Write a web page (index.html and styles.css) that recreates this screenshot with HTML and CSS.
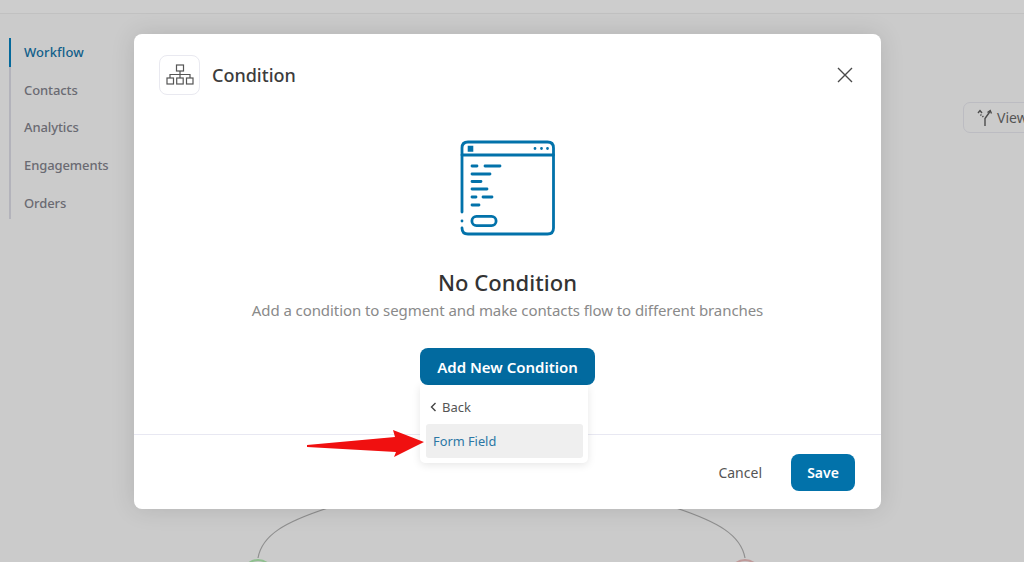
FILE: index.html
```html
<!DOCTYPE html>
<html lang="en">

<head>
    <meta charset="UTF-8">
    <title>Condition</title>
    <link rel="stylesheet" href="styles.css">
</head>

<body>
    <div class="topbar"></div>

    <ul class="sidenav">
        <li class="active">Workflow</li>
        <li>Contacts</li>
        <li>Analytics</li>
        <li>Engagements</li>
        <li>Orders</li>
    </ul>

    <div class="viewbtn">
        <svg width="16" height="18" viewBox="0 0 16 18" fill="none" stroke="#4c4c4c" stroke-width="1.4">
            <path d="M8 17V9.500L13 2.500" />
            <path d="M10.500 3.500L13.200 1.500L14.500 4.500" />
            <path d="M1 4L3 1.500L5 4" />
            <path d="M3.500 5.500L4.300 6.500M5.500 7L6.300 8" />
        </svg>
        View
    </div>

    <!-- flow lines behind the modal -->
    <svg class="flow" width="1024" height="562" viewBox="0 0 1024 562" fill="none">
        <path d="M258 558C262 535 285 522 328 508" stroke="#8f8f8f" stroke-width="1.2" />
        <path d="M745 558C741 535 718 522 676 508" stroke="#8f8f8f" stroke-width="1.2" />
        <circle cx="258" cy="575" r="15" fill="#c4c9c4" stroke="#8fbf8f" stroke-width="2" />
        <circle cx="745" cy="575" r="15" fill="#c9c4c4" stroke="#bf9a9a" stroke-width="2" />
    </svg>

    <div class="modal">
        <div class="modal-head">
            <div class="head-icon">
                <svg width="28" height="21" viewBox="0 0 28 21" fill="none" stroke="#555" stroke-width="1.2">
                    <rect x="10.500" y="1" width="7" height="6" />
                    <path d="M14 7V14M4 14V10.500H24V14" />
                    <rect x="1" y="14" width="6.500" height="6" />
                    <rect x="10.700" y="14" width="6.500" height="6" />
                    <rect x="20.500" y="14" width="6.500" height="6" />
                </svg>
            </div>
            <h2>Condition</h2>
            <svg class="close" width="16" height="16" viewBox="0 0 16 16" stroke="#4a4a4a" stroke-width="1.4">
                <path d="M1 1L15 15M15 1L1 15" />
            </svg>
        </div>

        <div class="modal-body">
            <svg class="empty-icon" width="96" height="96" viewBox="0 0 96 96" fill="none" stroke="#0272aa" stroke-width="2.800" stroke-linecap="round">
                <path d="M2 72V8Q2 2 8 2H87.500Q93.500 2 93.500 8V88Q93.500 94 87.500 94H8Q2 94 2 88" />
                <path d="M2 15H93.500" />
                <path d="M2 81V81.100" />
                <path d="M8.500 6.500H12.500V11H8.500Z" fill="#0272aa" stroke-width="1.600" />
                <path d="M75 8.500V8.600M81.500 8.500V8.600M87.500 8.500V8.600" />
                <path d="M12 26H17M25 26H40M12 34H30M12 41.500H21M12 49H27M12 57H16M23 57H32M12 65H19" />
                <rect x="11.900" y="76.400" width="24.200" height="9.200" rx="4.600" />
            </svg>
            <h1>No Condition</h1>
            <p>Add a condition to segment and make contacts flow to different branches</p>
            <button class="btn btn-primary btn-add">Add New Condition</button>
        </div>

        <div class="modal-foot">
            <span class="cancel">Cancel</span>
            <button class="btn btn-primary btn-save">Save</button>
        </div>

        <div class="dropdown">
            <div class="drop-back">
                <svg width="7" height="10" viewBox="0 0 7 10" fill="none" stroke="#444" stroke-width="1.4">
                    <path d="M5.500 1L1.500 5L5.500 9" />
                </svg>
                Back
            </div>
            <div class="drop-item">Form Field</div>
        </div>
    </div>

    <svg class="arrow" width="122" height="32" viewBox="0 0 122 32">
        <path d="M1 17L89 9L87 2L118 14L88 29L90 24L1 19Z" fill="#f01010" />
    </svg>
</body>

</html>
```

FILE: styles.css
```css
* {
    margin: 0;
    padding: 0;
    box-sizing: border-box;
}

body {
    width: 1024px;
    height: 562px;
    overflow: hidden;
    background-color: #cbcbcb;
    font-family: "Noto Sans", "Open Sans", sans-serif;
    position: relative;
}

.topbar {
    height: 14px;
    background-color: #cdcdcd;
    border-bottom: 1px solid #c1c1c1;
}

.sidenav {
    list-style: none;
    width: 110px;
    margin: 24px 0 0 9px;
    border-left: 2px solid #b3b3bb;
}

.sidenav li {
    height: 37.600px;
    line-height: 29px;
    padding-left: 13px;
    margin-left: -2px;
    border-left: 2px solid transparent;
    font-size: 13px;
    font-weight: 500;
    color: #6a6a72;
    letter-spacing: -0.1px;
    white-space: nowrap;
}

.sidenav li:last-child {
    height: 30px;
}

.sidenav li.active {
    height: 29px;
    margin-bottom: 8.800px;
    border-left-color: #05699b;
    color: #125f8a;
    letter-spacing: 0.1px;
}

.viewbtn {
    position: absolute;
    left: 963px;
    top: 102px;
    width: 90px;
    height: 31px;
    display: flex;
    align-items: center;
    gap: 4px;
    padding-left: 13px;
    border: 1px solid #bcbcc2;
    border-radius: 7px;
    font-size: 14px;
    color: #555;
}

.flow {
    position: absolute;
    left: 0;
    top: 0;
}

.modal {
    position: absolute;
    left: 134px;
    top: 34px;
    width: 747px;
    height: 475px;
    background-color: #fff;
    border-radius: 8px;
    box-shadow: 0 0 24px rgba(0, 0, 0, 0.12);
    display: flex;
    flex-direction: column;
}

.modal-head {
    display: flex;
    align-items: center;
    height: 81px;
    padding: 0 28px 0 25px;
    flex-shrink: 0;
}

.head-icon {
    width: 41px;
    height: 40px;
    margin-right: 12px;
    border: 1px solid #e9e9f0;
    border-radius: 8px;
    display: flex;
    align-items: center;
    justify-content: center;
}

.modal-head h2 {
    font-size: 18px;
    font-weight: 500;
    color: #3c3c3c;
    flex: 1;
}

.modal-body {
    flex: 1;
    display: flex;
    flex-direction: column;
    align-items: center;
    padding-top: 25px;
    border-bottom: 1px solid #e8e8f2;
}

.empty-icon {
    display: block;
    margin-bottom: 31px;
}

.modal-body h1 {
    font-size: 22px;
    line-height: 30px;
    font-weight: 500;
    letter-spacing: 0.05px;
    color: #333;
}

.modal-body p {
    font-size: 15px;
    line-height: 25px;
    color: #8a8a8a;
    margin: 1px 0 25px;
    letter-spacing: -0.08px;
}

.btn {
    font-family: inherit;
    border: none;
    border-radius: 8px;
    background-color: #0272aa;
    color: #fff;
    font-size: 15px;
    font-weight: 600;
}

.btn-add {
    width: 175px;
    height: 37px;
    background-color: #026a9f;
}

.modal-foot {
    height: 74px;
    flex-shrink: 0;
    display: flex;
    align-items: center;
    justify-content: flex-end;
    padding: 1px 26px 0 0;
}

.cancel {
    font-size: 14px;
    color: #555;
    margin-right: 29px;
}

.btn-save {
    width: 64px;
    height: 37px;
    font-size: 14px;
}

.dropdown {
    position: absolute;
    left: 286px;
    top: 351px;
    width: 168px;
    height: 78px;
    background-color: #fff;
    border-radius: 0 0 5px 5px;
    box-shadow: 0 2px 8px rgba(0, 0, 0, 0.1);
    padding: 0 5px 0 6px;
}

.drop-back {
    height: 39px;
    display: flex;
    align-items: center;
    gap: 5px;
    padding: 5px 0 0 4px;
    font-size: 13px;
    color: #555;
}

.drop-item {
    height: 34px;
    line-height: 34px;
    padding-left: 7px;
    background-color: #efefef;
    border-radius: 3px;
    font-size: 12.800px;
    color: #2b77a5;
}

.arrow {
    position: absolute;
    left: 306px;
    top: 428px;
}
```
